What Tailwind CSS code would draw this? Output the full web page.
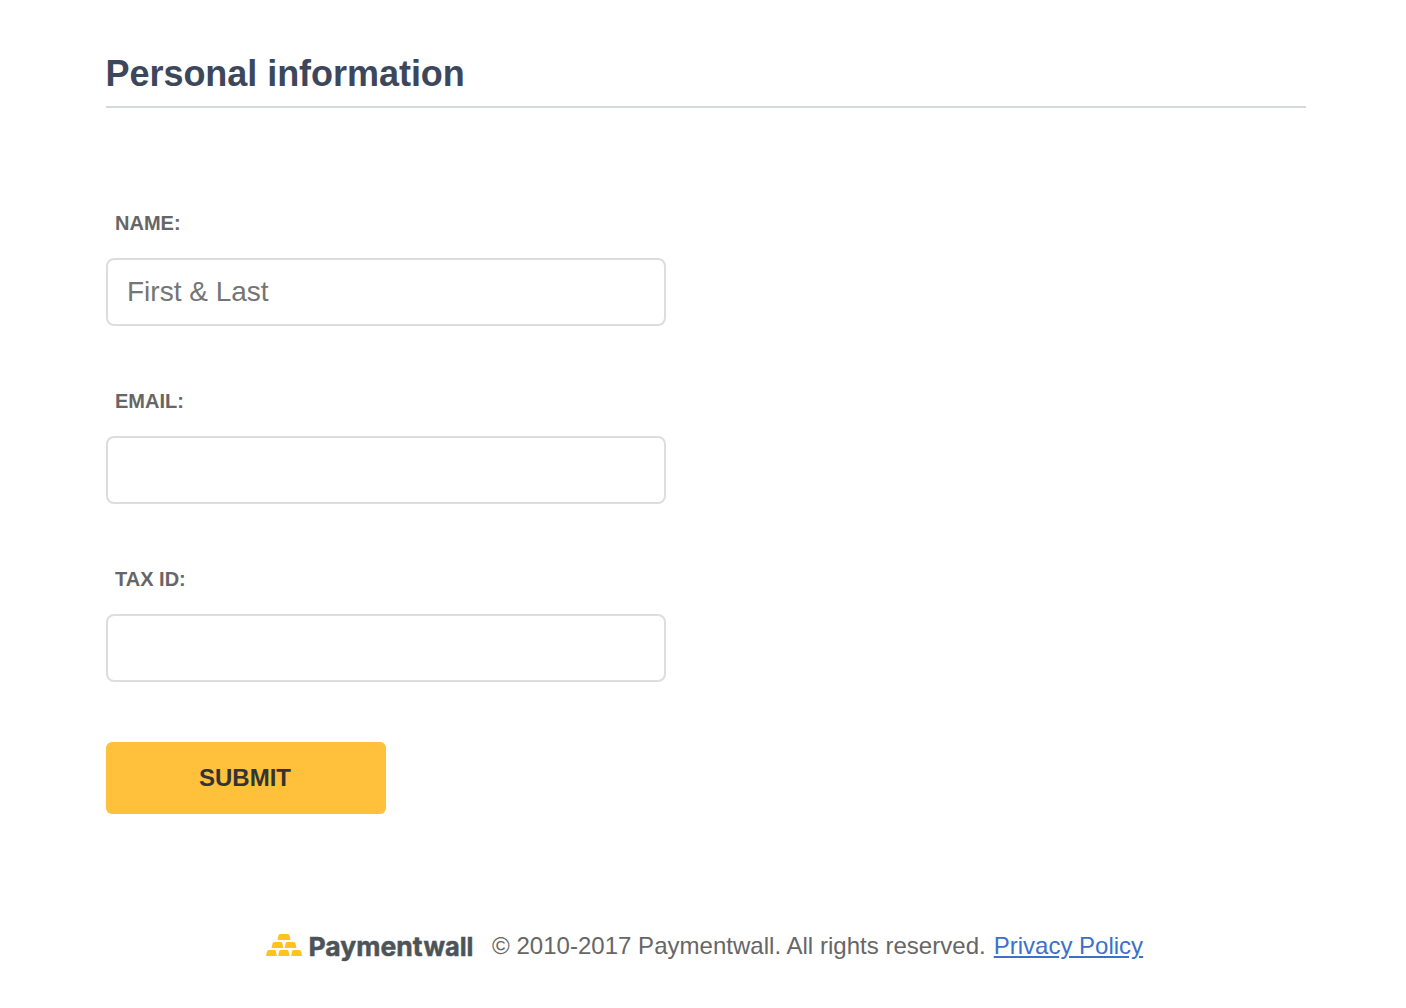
<!DOCTYPE html>
<html lang="en">
<head>
<meta charset="utf-8">
<title>Personal information</title>
<script src="https://cdn.jsdelivr.net/npm/@tailwindcss/browser@4"></script>
</head>
<body class="bg-white font-['Liberation_Sans',Arial,sans-serif] text-[#666]">
<main class="ml-[106px] w-[1200px] pt-[46px]">
  <h1 class="h-[62px] border-b-2 border-[#d5d9dc] text-4xl leading-[56px] font-bold text-[#3d475c]"><span class="-ml-[0.5px] tracking-[-0.04px]">Personal information</span></h1>
  <form class="flex flex-col items-start pt-[92px]">
    <label for="name" class="h-[58px] pl-[9px] text-xl leading-[46px] font-bold">NAME:</label>
    <input id="name" placeholder="First &amp; Last" class="mb-[52px] h-[68px] w-[560px] rounded-lg border-2 border-[#ddd] px-[19px] text-[28px] placeholder:text-[#757575]">
    <label for="email" class="h-[58px] pl-[9px] text-xl leading-[46px] font-bold">EMAIL:</label>
    <input id="email" class="mb-[52px] h-[68px] w-[560px] rounded-lg border-2 border-[#ddd] px-[19px] text-[28px]">
    <label for="tax" class="h-[58px] pl-[9px] text-xl leading-[46px] font-bold">TAX ID:</label>
    <input id="tax" class="mb-[60px] h-[68px] w-[560px] rounded-lg border-2 border-[#ddd] px-[19px] text-[28px]">
    <button type="button" class="h-[72px] w-[280px] rounded-md bg-[#ffc13b] pr-[2px] text-2xl font-bold text-[#333]">SUBMIT</button>
  </form>
</main>
<footer class="flex items-center pt-[114px] pl-[266px] text-2xl leading-9 whitespace-nowrap">
  <svg class="mr-[16px] h-9 w-[210px] shrink-0 overflow-visible" viewBox="0 0 210 36">
    <g fill="#ffc31a">
      <path d="M14 6h8q1.200 0 1.500 1.500L24.500 12h-13l1-4.500Q12.800 6 14 6Z"/>
      <path d="M8 14h7q1.200 0 1.500 1.500l.8 4.500H5.500l1-4.500Q6.800 14 8 14Z"/>
      <path d="M21 14h7q1.200 0 1.500 1.500l1 4.500H18.700l.8-4.500Q19.800 14 21 14Z"/>
      <path d="M2.500 22h6q1.200 0 1.500 1.500l.8 4.500H0l1-4.500Q1.300 22 2.500 22Z"/>
      <path d="M14.500 22h6.600q1.200 0 1.500 1.500l1 4.500H12.200l.8-4.500Q13.300 22 14.500 22Z"/>
      <path d="M27.500 22h6q1.200 0 1.500 1.500l1 4.500H25.200l.8-4.500Q26.300 22 27.500 22Z"/>
    </g>
    <g fill="#4c5459" stroke="#4c5459" stroke-width="0.500" class="font-[Inter,sans-serif] text-[26px] font-bold">
      <text x="42.500" y="27.500" textLength="114" lengthAdjust="spacingAndGlyphs">Payment</text>
      <text x="157.500" y="27.500" textLength="50" lengthAdjust="spacingAndGlyphs">wall</text>
    </g>
  </svg>
  <span class="mr-2 tracking-[0.025px]">© 2010-2017 Paymentwall. All rights reserved.</span>
  <a href="#" class="text-[#3b71ca] underline">Privacy Policy</a>
</footer>
</body>
</html>
